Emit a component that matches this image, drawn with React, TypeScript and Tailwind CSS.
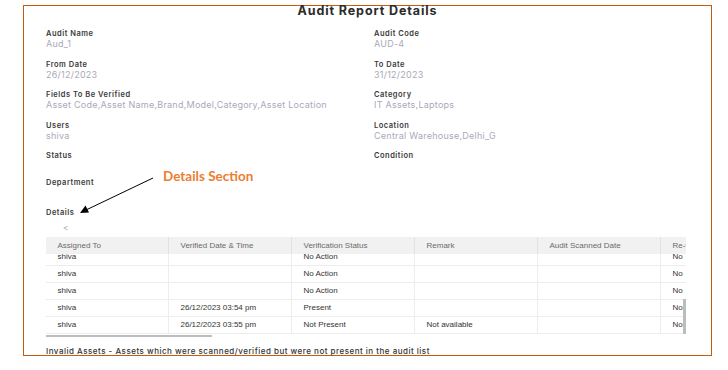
import React from "react";

const FIELDS: { label: string; value?: string; right: string; rightValue?: string; h: string }[] = [
  { label: "Audit Name", value: "Aud_1", right: "Audit Code", rightValue: "AUD-4", h: "h-[30.5px]" },
  { label: "From Date", value: "26/12/2023", right: "To Date", rightValue: "31/12/2023", h: "h-[30.5px]" },
  {
    label: "Fields To Be Verified",
    value: "Asset Code,Asset Name,Brand,Model,Category,Asset Location",
    right: "Category",
    rightValue: "IT Assets,Laptops",
    h: "h-[30.5px]",
  },
  { label: "Users", value: "shiva", right: "Location", rightValue: "Central Warehouse,Delhi_G", h: "h-[30.5px]" },
  { label: "Status", right: "Condition", h: "h-[27px]" },
];

const COLUMNS = [
  { title: "Assigned To", w: "w-[122px]" },
  { title: "Verified Date & Time", w: "w-[123px]" },
  { title: "Verification Status", w: "w-[123px]" },
  { title: "Remark", w: "w-[123px]" },
  { title: "Audit Scanned Date", w: "w-[123px]" },
  { title: "Re-verified", w: "w-[123px]" },
];

const ROWS = [
  ["shiva", "", "No Action", "", "", "No"],
  ["shiva", "", "No Action", "", "", "No"],
  ["shiva", "", "No Action", "", "", "No"],
  ["shiva", "26/12/2023 03:54 pm", "Present", "", "", "No"],
  ["shiva", "26/12/2023 03:55 pm", "Not Present", "Not available", "", "No"],
];

function Field({ label, value }: { label: string; value?: string }) {
  return (
    <div>
      <div className="h-[10px] leading-[10px] text-[7.5px] tracking-[0.5px] font-semibold text-[#3a3a3a]">{label}</div>
      {value && (
        <div className="h-[10px] leading-[10px] text-[9px] tracking-[0.25px] text-[#a9a9b9] whitespace-nowrap">{value}</div>
      )}
    </div>
  );
}

export default function App() {
  return (
    <div className="relative w-[728px] h-[370px] bg-white overflow-hidden font-['Inter',sans-serif]">
      <div className="ml-[23px] mt-[5px] w-[689px] h-[351px] border border-[#c55a11] pl-[22px]">
        <div className="h-[10px] leading-[10px] -ml-[22px] text-center text-[12.5px] tracking-[0.9px] font-bold text-[#2b2b2b]">
          Audit Report Details
        </div>

        <div className="mt-[13px]">
          {FIELDS.map((f) => (
            <div key={f.label} className={`grid grid-cols-[328px_1fr] ${f.h}`}>
              <Field label={f.label} value={f.value} />
              <Field label={f.right} value={f.rightValue} />
            </div>
          ))}
          <div className="h-[30px]">
            <Field label="Department" />
          </div>
          <Field label="Details" />
        </div>

        <div className="mt-[5px] h-[10px] leading-[10px] pl-[17px] text-[8px] text-[#999]">&lt;</div>

        <div className="relative mt-[4px] w-[640px] overflow-hidden font-['Liberation_Sans',Arial,sans-serif] text-[8px]">
          <div className="flex h-[17px] bg-[#f1f1f1] text-[#6b6b6b]">
            {COLUMNS.map((c, i) => (
              <div
                key={c.title}
                className={`${c.w} shrink-0 pl-[11.5px] leading-[17px] whitespace-nowrap ${i > 0 ? "border-l border-[#e2e2e2]" : ""}`}
              >
                {c.title}
              </div>
            ))}
          </div>
          <div className="h-[80px] overflow-hidden">
            <div className="-mt-[5px]">
              {ROWS.map((r, ri) => (
                <div key={ri} className="flex h-[17px] border-b border-[#ededed] text-[#333]">
                  {r.map((cell, ci) => (
                    <div
                      key={ci}
                      className={`${COLUMNS[ci].w} shrink-0 pl-[11.5px] leading-[16px] whitespace-nowrap ${ci > 0 ? "border-l border-[#ededed]" : ""}`}
                    >
                      {cell}
                    </div>
                  ))}
                </div>
              ))}
            </div>
          </div>
          <div className="absolute right-0 top-[62px] w-[3px] h-[36px] bg-[#bcbcbc]" />
        </div>
        <div className="mt-[1px] w-[166px] h-[2px] bg-[#bdbdbd]" />

        <div className="mt-[9px] h-[10px] leading-[10px] text-[8px] tracking-[0.5px] font-medium text-[#333] whitespace-nowrap">
          Invalid Assets - Assets which were scanned/verified but were not present in the audit list
        </div>
      </div>

      <div className="absolute left-[163px] top-[167px] leading-[18px] text-[13.5px] font-bold text-[#ed7d31] font-['Lato',sans-serif]">
        Details Section
      </div>
      <svg className="absolute left-0 top-0" width="728" height="370" viewBox="0 0 728 370">
        <line x1="153" y1="178" x2="86" y2="210" stroke="#000" strokeWidth="1" />
        <polygon points="80,213 89,212.5 85.5,205.5" fill="#000" />
      </svg>
    </div>
  );
}
